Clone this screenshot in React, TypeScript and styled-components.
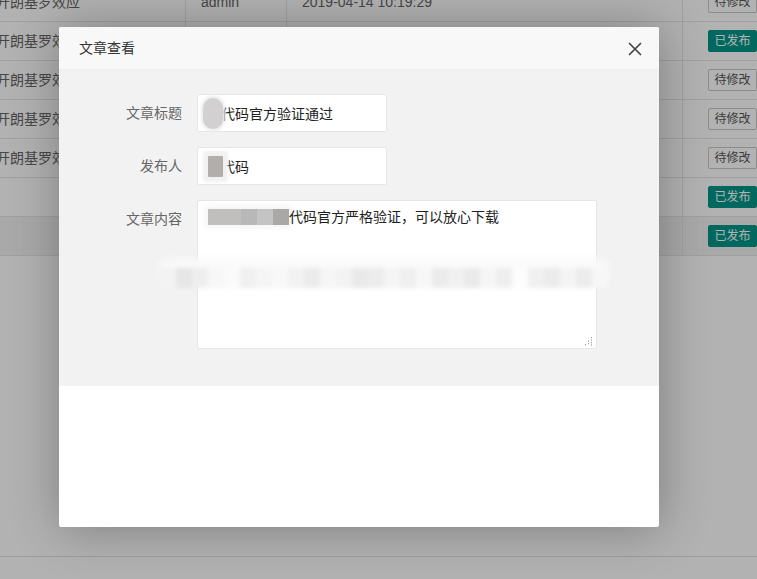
import styled, { createGlobalStyle } from 'styled-components';

const GlobalStyle = createGlobalStyle`
  html, body {
    margin: 0;
    padding: 0;
    overflow: hidden;
    background: #fff;
  }
  * { box-sizing: border-box; }
  body {
    font-family: "Liberation Sans", "Noto Sans CJK SC", sans-serif;
  }
`;

interface Row {
  title: string;
  author: string;
  time: string;
  published: boolean;
}

const rows: Row[] = [
  { title: '开朗基罗效应', author: 'admin', time: '2019-04-14 10:19:29', published: false },
  { title: '开朗基罗效应', author: 'admin', time: '2019-04-14 10:19:29', published: true },
  { title: '开朗基罗效应', author: 'admin', time: '2019-04-14 10:19:29', published: false },
  { title: '开朗基罗效应', author: 'admin', time: '2019-04-14 10:19:29', published: false },
  { title: '开朗基罗效应', author: 'admin', time: '2019-04-14 10:19:29', published: false },
  { title: '', author: 'admin', time: '2019-04-14 10:19:29', published: true },
  { title: '', author: 'admin', time: '2019-04-14 10:19:29', published: true },
];

// pixelated blur over the second line of the article body
const mosaic = [
  '#f3f3f3', '#e6e6e6', '#eeeeee', '#f7f7f7', '#fafafa', '#f0f0f0', '#f5f5f5', '#f8f8f8',
  '#f2f2f2', '#ebebeb', '#f6f6f6', '#f3f3f3', '#e9e9e9', '#ececec', '#f5f5f5', '#efefef',
  '#f7f7f7', '#ebebeb', '#f1f1f1', '#eaeaea', '#f6f6f6', '#eeeeee', '#fdfdfd', '#f0f0f0',
  '#ebebeb', '#f4f4f4', '#ececec', '#f7f7f7',
];

const gripDots = [
  [7, 1], [7, 3.5], [7, 6], [7, 8.5],
  [4, 4.5], [4, 7],
  [1, 8],
];

function App() {
  return (
    <>
      <GlobalStyle />
      <Page>
        <Table>
          <colgroup>
            <col style={{ width: 205 }} />
            <col style={{ width: 101 }} />
            <col style={{ width: 396 }} />
            <col style={{ width: 100 }} />
          </colgroup>
          <tbody>
            {rows.map((r, i) => (
              <TableRow key={i} $hover={i === rows.length - 1}>
                <Cell>{r.title}</Cell>
                <Cell>{r.author}</Cell>
                <Cell>{r.time}</Cell>
                <Cell $center>
                  <StatusButton $published={r.published}>{r.published ? '已发布' : '待修改'}</StatusButton>
                </Cell>
              </TableRow>
            ))}
          </tbody>
        </Table>
        <Pager />
        <Shade />
        <Dialog>
          <DialogHeader>
            文章查看
            <CloseButton aria-label="close">
              <svg width="14" height="14" viewBox="0 0 14 14">
                <path d="M1.5 1.5 L12.5 12.5 M12.5 1.5 L1.5 12.5" stroke="#444" strokeWidth="1.7" strokeLinecap="round" />
              </svg>
            </CloseButton>
          </DialogHeader>
          <DialogBody>
            <FormItem>
              <Label>文章标题</Label>
              <Field>
                <Blot $kind="soft" />
                <span>代码官方验证通过</span>
              </Field>
            </FormItem>
            <FormItem>
              <Label>发布人</Label>
              <Field>
                <Blot $kind="dark" />
                <span>代码</span>
              </Field>
            </FormItem>
            <FormItem>
              <Label>文章内容</Label>
              <TextArea>
                <LineMosaic>
                  <i style={{ width: 33, background: '#c1bfbd' }} />
                  <i style={{ width: 16, background: '#b8b8b8' }} />
                  <i style={{ width: 16, background: '#c4c4c4' }} />
                  <i style={{ width: 16, background: '#aaa8a6' }} />
                </LineMosaic>
                代码官方严格验证，可以放心下载
                <Grip width="9" height="10" viewBox="0 0 9 10">
                  {gripDots.map(([x, y], i) => (
                    <rect key={i} x={x} y={y} width="1" height="1.2" fill="#9a9a9a" />
                  ))}
                </Grip>
              </TextArea>
            </FormItem>
            <Smudge>
              {mosaic.map((c, i) => (
                <span key={i} style={{ background: c }} />
              ))}
            </Smudge>
          </DialogBody>
        </Dialog>
      </Page>
    </>
  );
}

export default App;

const Page = styled.div`
  position: relative;
  width: 757px;
  height: 579px;
  overflow: hidden;
  background: #fff;
`;

const Table = styled.table`
  margin: -18px 0 0 -20px;
  width: 802px;
  table-layout: fixed;
  border-collapse: collapse;
  font-size: 14px;
  color: #666;
`;

const TableRow = styled.tr<{ $hover?: boolean }>`
  background: ${({ $hover }) => ($hover ? '#f2f2f2' : '#fff')};
`;

const Cell = styled.td<{ $center?: boolean }>`
  height: 39px;
  padding: 0 15px;
  border: 1px solid #e6e6e6;
  line-height: 20px;
  white-space: nowrap;
  overflow: hidden;
  text-align: ${({ $center }) => ($center ? 'center' : 'left')};
`;

const StatusButton = styled.span<{ $published: boolean }>`
  display: inline-block;
  height: 22px;
  line-height: 20px;
  padding: 0 5px;
  font-size: 12px;
  border-radius: 2px;
  vertical-align: middle;
  border: 1px solid ${({ $published }) => ($published ? '#009688' : '#c9c9c9')};
  background: ${({ $published }) => ($published ? '#009688' : '#fff')};
  color: ${({ $published }) => ($published ? '#fff' : '#555')};
`;

const Pager = styled.div`
  margin-top: 300px;
  height: 40px;
  border-top: 1px solid #e2e2e2;
`;

const Shade = styled.div`
  position: absolute;
  inset: 0;
  background: rgba(0, 0, 0, 0.3);
`;

const Dialog = styled.div`
  position: absolute;
  left: 59px;
  top: 27px;
  width: 600px;
  height: 500px;
  background: #fff;
  border-radius: 2px;
  box-shadow: 1px 1px 50px rgba(0, 0, 0, 0.3);
  overflow: hidden;
`;

const DialogHeader = styled.div`
  position: relative;
  height: 43px;
  line-height: 42px;
  padding: 0 80px 0 20px;
  background: #f8f8f8;
  border-bottom: 1px solid #eee;
  font-size: 14px;
  color: #333;
`;

const CloseButton = styled.span`
  position: absolute;
  right: 17px;
  top: 15px;
  width: 14px;
  height: 14px;
  display: flex;
`;

const DialogBody = styled.div`
  position: relative;
  height: 316px;
  background: #f2f2f2;
  padding: 24px 0 0 28px;
  display: flex;
  flex-direction: column;
  gap: 15px;
`;

const FormItem = styled.div`
  display: flex;
  align-items: flex-start;
`;

const Label = styled.label`
  width: 110px;
  flex: none;
  padding: 9px 15px 9px 0;
  line-height: 20px;
  text-align: right;
  font-size: 14px;
  color: #666;
`;

const Field = styled.div`
  width: 190px;
  height: 38px;
  padding: 0 10px 0 8px;
  display: flex;
  align-items: center;
  background: #fff;
  border: 1px solid #e6e6e6;
  border-radius: 2px;
  font-size: 14px;
  color: #222;
  white-space: nowrap;
`;

const Blot = styled.span<{ $kind: 'soft' | 'dark' }>`
  flex: none;
  display: inline-block;
  margin-right: -2px;
  width: ${({ $kind }) => ($kind === 'soft' ? '20px' : '15px')};
  height: ${({ $kind }) => ($kind === 'soft' ? '31px' : '21px')};
  margin-left: ${({ $kind }) => ($kind === 'soft' ? '-3px' : '2px')};
  border-radius: ${({ $kind }) => ($kind === 'soft' ? '10px' : '1px')};
  background: ${({ $kind }) => ($kind === 'soft' ? '#d2d0d0' : '#b1aeac')};
  box-shadow: ${({ $kind }) => ($kind === 'soft'
    ? '0 0 3px 2px #ebebeb'
    : '0 0 3px 5px #f1f1f1')};
  position: relative;
  z-index: 1;
`;

const TextArea = styled.div`
  position: relative;
  width: 400px;
  height: 149px;
  padding: 6px 10px;
  background: #fff;
  border: 1px solid #e6e6e6;
  border-radius: 2px;
  font-size: 14px;
  line-height: 20px;
  color: #222;
  overflow: hidden;
  white-space: nowrap;
`;

const Grip = styled.svg`
  position: absolute;
  right: 3px;
  bottom: 2px;
`;

const LineMosaic = styled.span`
  display: inline-flex;
  height: 16px;
  vertical-align: -3px;
  border-radius: 2px;
  box-shadow: 0 0 5px 4px #f7f7f7;
  i { display: block; height: 100%; }
`;

const Smudge = styled.div`
  position: absolute;
  left: 101px;
  top: 198px;
  width: 448px;
  height: 20px;
  display: flex;
  border-radius: 10px;
  filter: blur(2px);
  box-shadow: 0 -8px 6px 2px rgba(250, 250, 250, 0.9);
  span { flex: 1; height: 100%; }
`;
